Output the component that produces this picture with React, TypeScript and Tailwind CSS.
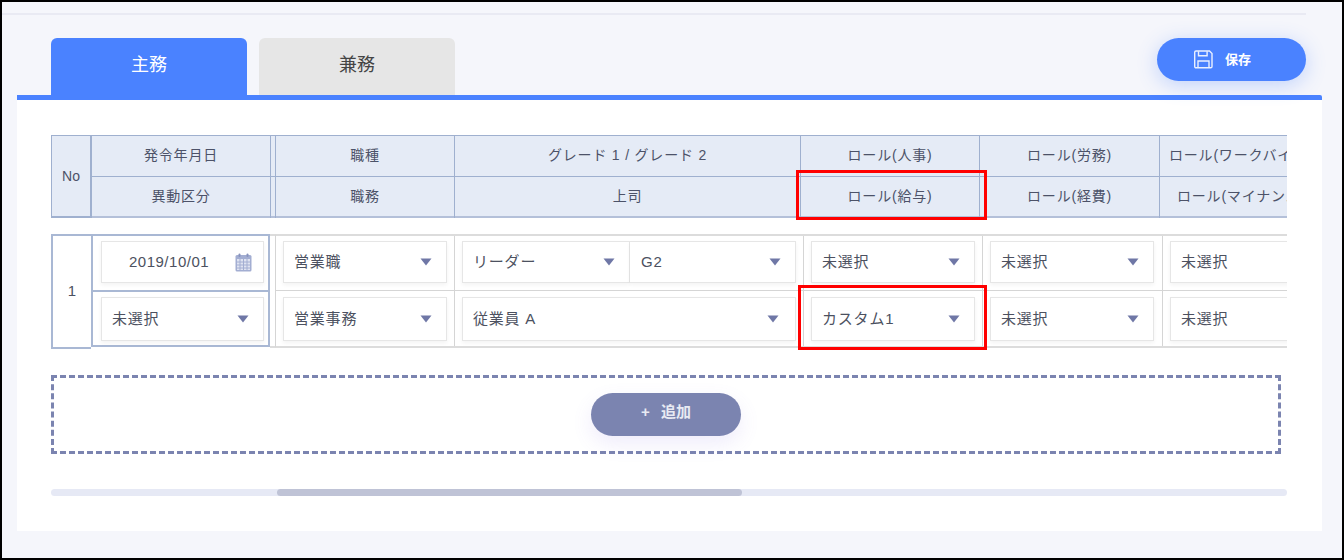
import React from "react";

const FONT = "font-['Liberation_Sans','Noto_Sans_CJK_JP',sans-serif]";

function Tri({ className = "" }: { className?: string }) {
  return (
    <svg width="12" height="8" viewBox="0 0 12 8" className={className}>
      <path d="M0.5 0.5 H11.5 L6 7.5 Z" fill="#6f77a6" />
    </svg>
  );
}

function Sel({ label, className = "w-[164px]", h = "h-[42px]" }: { label: string; className?: string; h?: string }) {
  return (
    <div className={`${h} flex items-center justify-between pl-[10px] pr-[14px] bg-white border border-[#e6e6e6] shadow-[0_2px_4px_rgba(0,0,0,0.05)] text-[15px] tracking-[0.8px] text-[#4c5160] ${className}`}>
      <span className="whitespace-nowrap">{label}</span>
      <Tri />
    </div>
  );
}

function CalendarIcon() {
  return (
    <svg width="17" height="19" viewBox="0 0 17 19">
      <rect x="0.5" y="2" width="16" height="16.5" rx="1.5" fill="#a3aed2" />
      <rect x="3.5" y="0.5" width="2" height="3.5" rx="1" fill="#8893bd" />
      <rect x="11.5" y="0.5" width="2" height="3.5" rx="1" fill="#8893bd" />
      <rect x="2" y="6" width="13" height="11" fill="#dfe3f1" />
      <path d="M2 9h13M2 12h13M2 15h13M5 6v11M8.5 6v11M12 6v11" stroke="#a3aed2" strokeWidth="1" />
    </svg>
  );
}

function SaveIcon() {
  return (
    <svg width="19" height="19" viewBox="0 0 19 19" fill="none" stroke="#eaf0ff" strokeWidth="1.4">
      <path d="M2 1h13.5L18 3.5V16.5a1.3 1.3 0 0 1-1.3 1.3H2a1.3 1.3 0 0 1-1.3-1.3V2.3A1.3 1.3 0 0 1 2 1Z" />
      <path d="M4.5 1.2v4.6h8.6V1.2" />
      <path d="M4 17.6v-6.6h11v6.6" />
    </svg>
  );
}

const headCols = [
  { w: "w-[179px]", a: "発令年月日", b: "異動区分", pa: "justify-center", pb: "justify-center" },
  { w: "w-[5px]", a: "", b: "", pa: "justify-center", pb: "justify-center" },
  { w: "w-[179px]", a: "職種", b: "職務", pa: "justify-center", pb: "justify-center" },
  { w: "w-[346px]", a: "グレード 1 / グレード 2", b: "上司", pa: "justify-center", pb: "justify-center" },
  { w: "w-[179px]", a: "ロール(人事)", b: "ロール(給与)", pa: "justify-center", pb: "justify-center" },
  { w: "w-[180px]", a: "ロール(労務)", b: "ロール(経費)", pa: "justify-center", pb: "justify-center" },
  { w: "w-[180px]", a: "ロール(ワークバイク)", b: "ロール(マイナンバー)", pa: "justify-start pl-[9px]", pb: "justify-start pl-[17px]" },
];

function HeadCell({ text, align }: { text: string; align: string }) {
  return (
    <div className={`h-[41px] flex items-center ${align} whitespace-nowrap overflow-hidden border-b border-[#9fb0cf] pb-[1px] last:border-b-2 last:border-[#b4c0d9]`}>
      {text}
    </div>
  );
}

function BodyCol({ w, a, b }: { w: string; a: React.ReactNode; b: React.ReactNode }) {
  return (
    <div className={`${w} shrink-0 border-r border-[#d5d5d5]`}>
      <div className="h-[55px] pl-[7px] pt-[5px] border-b border-[#d5d5d5]">{a}</div>
      <div className="h-[56px] pl-[7px] pt-[6px]">{b}</div>
    </div>
  );
}

const H2 = "h-[44px]";

export default function App() {
  return (
    <div className={`${FONT} relative box-border w-[1344px] h-[560px] overflow-hidden border-2 border-black bg-[#f5f6fb]`}>
      <div className="mt-[11px] mr-[36px] h-[2px] bg-[#e9eaf3]" />

      <div className="relative z-10 mt-[23px] ml-[49px] mr-[36px] h-[57px] flex justify-between">
        <div className="flex gap-[12px]">
          <div className="w-[196px] h-[57px] rounded-t-[6px] bg-[#4a82ff] text-white text-[18px] flex items-center justify-center pb-[2px]">主務</div>
          <div className="w-[196px] h-[57px] rounded-t-[6px] bg-[#e6e6e6] text-[#444444] text-[18px] flex items-center justify-center pb-[2px]">兼務</div>
        </div>
        <div className="w-[149px] h-[43px] rounded-full bg-[#4a82ff] shadow-[0_4px_20px_rgba(74,130,255,0.3)] flex items-center justify-center gap-[12px] text-white text-[13px] font-bold pr-[18px]">
          <SaveIcon />
          <span>保存</span>
        </div>
      </div>

      <div className="ml-[15px] mr-[20px] h-[436px] bg-white border-t-[5px] border-[#4a82ff] rounded-tr-[2px] pt-[35px] pl-[34px]">
        <div className="w-[1236px] overflow-hidden">
          <div className="flex w-max border-t border-[#9fb0cf] bg-[#e5ebf6] text-[14px] tracking-[0.8px] text-[#4c5268] h-[83px]">
            <div className="w-[41px] shrink-0 flex items-center justify-center tracking-normal border-l border-r-2 border-b-2 border-[#9fb0cf]">No</div>
            {headCols.map((c, i) => (
              <div key={i} className={`${c.w} shrink-0 border-r border-[#9fb0cf]`}>
                <HeadCell text={c.a} align={c.pa} />
                <HeadCell text={c.b} align={c.pb} />
              </div>
            ))}
          </div>

          <div className="flex w-max mt-[16px] h-[115px] text-[14px] text-[#4c5160]">
            <div className="w-[40px] shrink-0 flex items-center justify-center border-2 border-r-0 border-[#a9b8d4] text-[15px]">1</div>
            <div className="w-[179px] h-[113px] shrink-0 border-2 border-[#a9b8d4]">
              <div className="h-[56px] pl-[8px] pt-[5px] border-b-2 border-[#a9b8d4]">
                <div className="w-[163px] h-[42px] flex items-center justify-between pl-[27px] pr-[11px] border border-[#e6e6e6] shadow-[0_2px_4px_rgba(0,0,0,0.05)] text-[15px] tracking-[0.5px]">
                  <span>2019/10/01</span>
                  <CalendarIcon />
                </div>
              </div>
              <div className="pl-[8px] pt-[5px]">
                <Sel label="未選択" className="w-[163px] pl-[9px]" h={H2} />
              </div>
            </div>
            <div className="w-[5px] h-[114px] shrink-0 border-y-2 border-[#dcdcdc]" />
            <div className="flex h-[114px] border-y-2 border-[#dcdcdc] border-l border-l-[#d5d5d5]">
              <BodyCol w="w-[179px]" a={<Sel label="営業職" />} b={<Sel label="営業事務" h={H2} />} />
              <BodyCol
                w="w-[349px]"
                a={
                  <div className="flex w-[334px]">
                    <Sel label="リーダー" className="w-[168px]" />
                    <Sel label="G2" className="w-[166px] border-l-0 pl-[11px]" />
                  </div>
                }
                b={<Sel label="従業員 A" className="w-[334px] pr-[16px]" h={H2} />}
              />
              <BodyCol w="w-[179px]" a={<Sel label="未選択" />} b={<Sel label="カスタム1" h={H2} />} />
              <BodyCol w="w-[180px]" a={<Sel label="未選択" />} b={<Sel label="未選択" h={H2} />} />
              <BodyCol w="w-[180px]" a={<Sel label="未選択" />} b={<Sel label="未選択" h={H2} />} />
            </div>
          </div>
        </div>

        <div className="mt-[26px] w-[1230px] h-[79px] border-[3px] border-dashed border-[#7b84b0] flex items-center justify-center pb-[1px]">
          <div className="w-[150px] h-[43px] rounded-full bg-[#7b84b0] shadow-[0_8px_20px_rgba(123,100,220,0.12)] flex items-center justify-center gap-[11px] text-[15px] font-bold pb-[3px]">
            <span className="text-[#e8eaf3]">+</span>
            <span className="text-[#e8eaf3]">追加</span>
          </div>
        </div>

        <div className="mt-[35px] w-[1236px] h-[7px] rounded-full bg-[#e6e9f5] pl-[226px]">
          <div className="w-[465px] h-[7px] rounded-full bg-[#bfc3d6]" />
        </div>
      </div>

      <div className="absolute left-[794px] top-[168px] w-[191px] h-[50px] border-[3px] border-[#ff0000]" />
      <div className="absolute left-[796px] top-[283px] w-[189px] h-[65px] border-[3px] border-[#ff0000]" />
    </div>
  );
}
